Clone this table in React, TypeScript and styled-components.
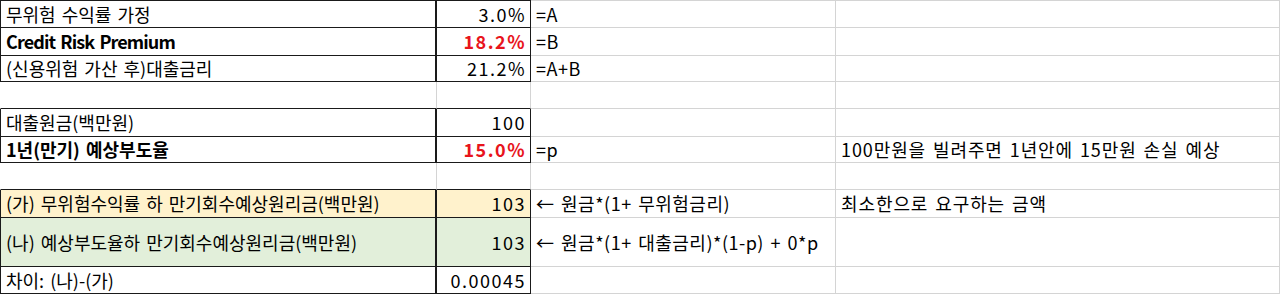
import { Fragment } from "react";
import styled, { createGlobalStyle } from "styled-components";

const GlobalStyle = createGlobalStyle`
  html, body {
    margin: 0;
    padding: 0;
    background: #ffffff;
  }
  body {
    font-family: "Noto Sans CJK KR", "Noto Sans", sans-serif;
    color: #000;
  }
`;

const GRID = "#d4d4d4";
const INK = "#1a1a1a";

const Sheet = styled.div`
  display: grid;
  grid-template-columns: 437px 94px 305px 444px;
  grid-template-rows: 28px 28px 26px 27px 28px 26px 27px 28px 49px 27px;
  width: 1280px;
`;

type CellProps = {
  $align?: "left" | "right";
  $bold?: boolean;
  $red?: boolean;
  $bg?: string;
  $boxed?: boolean;
  $first?: boolean;
  $top?: boolean;
  $inkBottom?: boolean;
  $thickRight?: boolean;
  $spacing?: number;
};

const Cell = styled.div<CellProps>`
  box-sizing: border-box;
  display: flex;
  align-items: center;
  justify-content: ${({ $align }) => ($align === "right" ? "flex-end" : "flex-start")};
  padding: 0 4px 1px 5px;
  font-size: 18px;
  word-spacing: 2px;
  letter-spacing: ${({ $spacing }) => $spacing ?? 0}px;
  font-weight: ${({ $bold }) => ($bold ? 700 : 400)};
  color: ${({ $red }) => ($red ? "#e8141c" : "#000")};
  background: ${({ $bg }) => $bg ?? "#fff"};
  white-space: nowrap;
  overflow: hidden;
  border-right: ${({ $thickRight, $boxed }) =>
    $thickRight ? `2px solid ${INK}` : `1px solid ${$boxed ? INK : GRID}`};
  border-bottom: 1px solid ${({ $boxed, $inkBottom }) => ($boxed || $inkBottom ? INK : GRID)};
  border-left: ${({ $first, $boxed }) => ($first ? `1px solid ${$boxed ? INK : "transparent"}` : "none")};
  border-top: ${({ $top, $boxed }) => ($top ? `1px solid ${$boxed ? INK : GRID}` : "none")};
`;

type Row = {
  label: string;
  value: string;
  note: string;
  memo: string;
  boxed: boolean;
  bold?: boolean;
  red?: boolean;
  bg?: string;
  inkBottom?: boolean;
  tight?: boolean;
};

const rows: Row[] = [
  { label: "무위험 수익률 가정", value: "3.0%", note: "=A", memo: "", boxed: true },
  {
    label: "Credit Risk Premium",
    value: "18.2%",
    note: "=B",
    memo: "",
    boxed: true,
    bold: true,
    red: true,
    tight: true,
  },
  { label: "(신용위험 가산 후)대출금리", value: "21.2%", note: "=A+B", memo: "", boxed: true },
  { label: "", value: "", note: "", memo: "", boxed: false, inkBottom: true },
  { label: "대출원금(백만원)", value: "100", note: "", memo: "", boxed: true },
  {
    label: "1년(만기) 예상부도율",
    value: "15.0%",
    note: "=p",
    memo: "100만원을 빌려주면 1년안에 15만원 손실 예상",
    boxed: true,
    bold: true,
    red: true,
  },
  { label: "", value: "", note: "", memo: "", boxed: false, inkBottom: true },
  {
    label: "(가) 무위험수익률 하 만기회수예상원리금(백만원)",
    value: "103",
    note: "← 원금*(1+ 무위험금리)",
    memo: "최소한으로 요구하는 금액",
    boxed: true,
    bg: "#fff2cc",
  },
  {
    label: "(나) 예상부도율하 만기회수예상원리금(백만원)",
    value: "103",
    note: "← 원금*(1+ 대출금리)*(1-p) + 0*p",
    memo: "",
    boxed: true,
    bg: "#e2efda",
  },
  { label: "차이: (나)-(가)", value: "0.00045", note: "", memo: "", boxed: true },
];

export default function App(): JSX.Element {
  return (
    <>
      <GlobalStyle />
      <Sheet>
        {rows.map((r, i) => (
          <Fragment key={i}>
            <Cell
              $boxed={r.boxed}
              $first
              $top={i === 0}
              $bold={r.bold}
              $bg={r.bg}
              $inkBottom={r.inkBottom}
              $thickRight={r.boxed}
              $spacing={r.tight ? -0.9 : 0}
            >
              {r.label}
            </Cell>
            <Cell
              $boxed={r.boxed}
              $top={i === 0}
              $align="right"
              $bold={r.bold}
              $red={r.red}
              $bg={r.bg}
              $inkBottom={r.inkBottom}
              $spacing={1.5}
            >
              {r.value}
            </Cell>
            <Cell $top={i === 0} $spacing={0.5}>
              {r.note}
            </Cell>
            <Cell $top={i === 0} $spacing={0.9}>
              {r.memo}
            </Cell>
          </Fragment>
        ))}
      </Sheet>
    </>
  );
}
